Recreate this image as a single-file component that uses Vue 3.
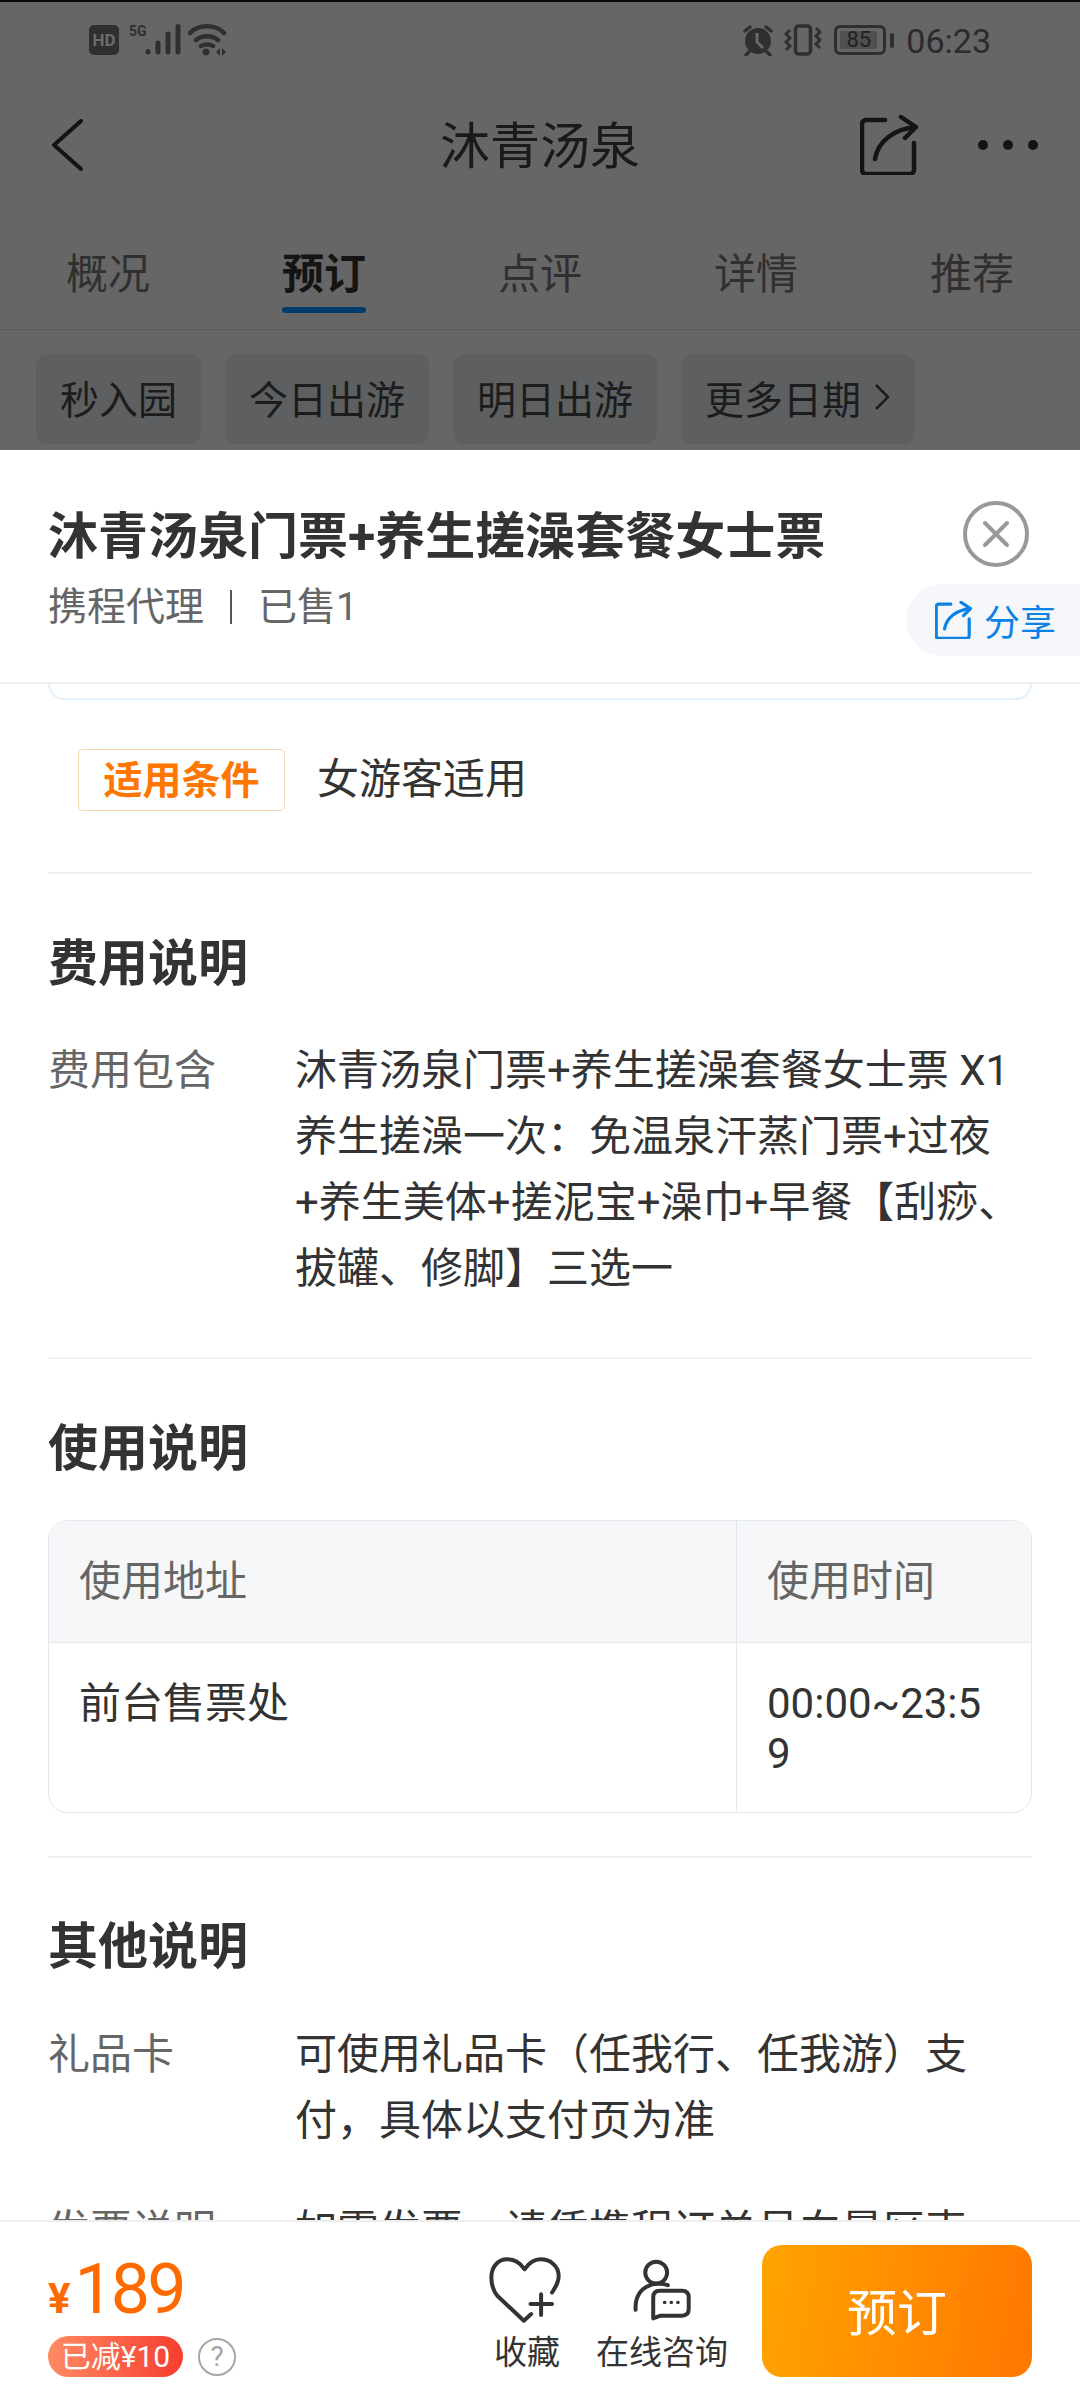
<template>
  <div class="page">
    <div class="backdrop">
      <div class="status">
        <div class="status-side">
          <span class="hd">HD</span>
          <svg class="signal" width="54" height="32" viewBox="0 0 54 32">
            <text x="0" y="12" class="five-g">5G</text>
            <path d="M19 27.5v.5M29 19v9M39 10v18M49 2.5v25.5" />
          </svg>
          <svg class="wifi" width="40" height="32" viewBox="0 0 40 32">
            <path d="M2 9C10 0 28 0 36 9M8 16c6-5 16-5 22 0M13 22c3-2 9-2 12 0" />
            <circle cx="18" cy="28" r="3.4" />
            <path class="wifi-arrows" d="M28 28l4-4v8zM34 24l4 4-4 4z" />
          </svg>
        </div>
        <div class="status-side">
          <svg width="32" height="32" viewBox="0 0 32 32">
            <circle cx="16" cy="17" r="13" class="fill" />
            <path d="M3 7l5-4M29 7l-5-4M7 28l-3 3M25 28l3 3" class="line" />
            <path d="M15 9v9l6 6" class="hand" />
          </svg>
          <svg class="vibrate" width="38" height="32" viewBox="0 0 38 32">
            <rect x="11.5" y="2" width="15" height="28" rx="3" class="line" />
            <path d="M6 6L2 10l4 4-4 4 4 4-4 4M32 4l4 4-4 4 4 4-4 4 4 4" class="zig" />
          </svg>
          <span class="battery"><span class="battery-in">85</span></span>
          <span class="battery-nub"></span>
          <span class="time">06:23</span>
        </div>
      </div>

      <div class="nav">
        <svg class="back" width="32" height="52" viewBox="0 0 32 52">
          <path d="M30 2L3 26l27 24" />
        </svg>
        <div class="nav-title">沐青汤泉</div>
        <div class="nav-right">
          <svg class="nav-share" width="60" height="60" viewBox="0 0 60 60">
            <path d="M25 5H6a4 4 0 0 0-4 4v46a4 4 0 0 0 4 4h44a4 4 0 0 0 4-4V28M15 44C18 26 34 14 56 12M41 2l15 10-11 11" />
          </svg>
          <div class="dots"><i></i><i></i><i></i></div>
        </div>
      </div>

      <div class="tabs">
        <div v-for="t in tabs" :key="t" class="tab" :class="{ active: t === '预订' }">
          <span>{{ t }}</span>
          <i class="tab-line"></i>
        </div>
      </div>

      <div class="chips">
        <div v-for="c in chips" :key="c" class="chip">{{ c }}</div>
        <div class="chip">
          更多日期
          <svg class="chip-arrow" width="18" height="30" viewBox="0 0 18 30">
            <path d="M3 3l12 12L3 27" />
          </svg>
        </div>
      </div>
    </div>

    <div class="sheet">
      <div class="sheet-head">
        <div class="sheet-title">沐青汤泉门票+养生搓澡套餐女士票</div>
        <div class="sheet-sub">携程代理<i class="bar"></i>已售1</div>
        <svg class="close" width="66" height="66" viewBox="0 0 66 66">
          <circle cx="33" cy="33" r="31" />
          <path d="M22 22l22 22M44 22L22 44" />
        </svg>
        <div class="share-pill">
          <svg width="38" height="38" viewBox="0 0 60 60">
            <path d="M25 5H6a4 4 0 0 0-4 4v46a4 4 0 0 0 4 4h44a4 4 0 0 0 4-4V28M15 44C18 26 34 14 56 12M41 2l15 10-11 11" />
          </svg>
          <span>分享</span>
        </div>
      </div>

      <div class="scroll">
        <div class="card-end"></div>
        <div class="cond">
          <span class="cond-tag">适用条件</span>
          <span class="cond-text">女游客适用</span>
        </div>

        <section class="block">
          <h3>费用说明</h3>
          <div class="row">
            <div class="row-label">费用包含</div>
            <div class="row-text">
              沐青汤泉门票+养生搓澡套餐女士票 X1<br />
              养生搓澡一次：免温泉汗蒸门票+过夜<br />
              +养生美体+搓泥宝+澡巾+早餐【刮痧、<br />
              拔罐、修脚】三选一
            </div>
          </div>
        </section>

        <section class="block">
          <h3 class="table-head">使用说明</h3>
          <div class="table">
            <div class="cell th">使用地址</div>
            <div class="cell th">使用时间</div>
            <div class="cell td">前台售票处</div>
            <div class="cell td">00:00~23:5<br />9</div>
          </div>
        </section>

        <section class="block last">
          <h3>其他说明</h3>
          <div class="row">
            <div class="row-label">礼品卡</div>
            <div class="row-text">
              可使用礼品卡（任我行、任我游）支<br />
              付，具体以支付页为准
            </div>
          </div>
          <div class="row next">
            <div class="row-label">发票说明</div>
            <div class="row-text">如需发票，请凭携程订单号向景区索</div>
          </div>
        </section>
      </div>

      <div class="footer">
        <div class="price-box">
          <div class="price"><span class="yen">¥</span>189</div>
          <div class="discount">
            <span class="discount-tag">已减¥10</span>
            <span class="help">?</span>
          </div>
        </div>
        <div class="action fav">
          <svg width="87" height="68" viewBox="71 50 260 205">
            <path d="M275 160C288 140 295 128 295 110C295 80 270 60 240 60C220 60 205 72 192 90C180 72 165 60 140 60C112 60 92 82 92 115C92 135 98 155 110 170L190 245L212 225M210 195H275M242 165V228" />
          </svg>
          <span>收藏</span>
        </div>
        <div class="action chat">
          <svg width="87" height="68" viewBox="476 50 260 205">
            <circle cx="587" cy="100" r="33" />
            <path d="M525 212C522 170 545 138 587 134C600 133 612 134 622 138" />
            <path d="M578 238V175Q578 155 598 155H665Q685 155 685 175V210Q685 230 665 230H600Z" />
            <path class="chat-dots" d="M612 190h1M632 190h1M652 190h1" />
          </svg>
          <span>在线咨询</span>
        </div>
        <div class="book">预订</div>
      </div>
    </div>
  </div>
</template>

<script setup>
const tabs = ['概况', '预订', '点评', '详情', '推荐'];
const chips = ['秒入园', '今日出游', '明日出游'];
</script>

<style scoped>
.page {
  width: 1080px;
  height: 2400px;
  overflow: hidden;
  display: flex;
  flex-direction: column;
  background: #666;
  font-family: Roboto, "Noto Sans CJK SC", sans-serif;
  color: #333;
}

/* dimmed page behind the sheet */
.backdrop {
  height: 450px;
  flex: none;
  overflow: hidden;
  box-sizing: border-box;
  border-top: 2px solid #0a0a0a;
}

.status {
  height: 78px;
  box-sizing: border-box;
  padding: 22px 89px 0 89px;
  display: flex;
  justify-content: space-between;
  align-items: flex-start;
}

.status-side {
  display: flex;
  align-items: center;
  height: 32px;
}

.hd {
  width: 30px;
  height: 30px;
  border-radius: 5px;
  background: #2f2f2f;
  color: #6a6a6a;
  font-size: 17px;
  font-weight: 700;
  line-height: 30px;
  text-align: center;
}

.signal {
  margin-left: 10px;
}

.signal path {
  fill: none;
  stroke: #2f2f2f;
  stroke-width: 5px;
  stroke-linecap: round;
}

.five-g {
  font-size: 14px;
  font-weight: 700;
  fill: #2f2f2f;
}

.wifi {
  margin-left: 5px;
}

.wifi path {
  fill: none;
  stroke: #2f2f2f;
  stroke-width: 4.5px;
  stroke-linecap: round;
}

.wifi circle,
.wifi .wifi-arrows {
  fill: #2f2f2f;
  stroke: none;
}

.fill {
  fill: #2f2f2f;
}

.line {
  fill: none;
  stroke: #2f2f2f;
  stroke-width: 3.5px;
  stroke-linecap: round;
}

.hand {
  fill: none;
  stroke: #6a6a6a;
  stroke-width: 3px;
}

.zig {
  fill: none;
  stroke: #2f2f2f;
  stroke-width: 3px;
}

.vibrate {
  margin-left: 10px;
}

.battery {
  width: 52px;
  height: 30px;
  margin-left: 12px;
  box-sizing: border-box;
  border: 3px solid #2f2f2f;
  border-radius: 6px;
  padding: 3px;
  display: flex;
}

.battery-in {
  width: 37px;
  background: #505050;
  border-radius: 2px;
  color: #222;
  font-size: 22px;
  line-height: 18px;
  text-align: center;
}

.battery-nub {
  width: 4px;
  height: 15px;
  margin-left: 4px;
  border-radius: 2px;
  background: #2f2f2f;
}

.time {
  margin-left: 12px;
  padding-top: 2px;
  font-size: 34px;
  line-height: 36px;
  color: #2b2b2b;
}

.nav {
  height: 130px;
  box-sizing: border-box;
  padding: 0 42px;
  display: grid;
  grid-template-columns: 1fr auto 1fr;
  align-items: center;
}

.back {
  margin-left: 9px;
}

.back path {
  fill: none;
  stroke: #141414;
  stroke-width: 4px;
  stroke-linecap: round;
  stroke-linejoin: round;
}

.nav-title {
  padding-top: 3px;
  font-size: 50px;
  line-height: 60px;
  color: #1a1a1a;
}

.nav-right {
  display: flex;
  justify-content: flex-end;
  align-items: center;
  gap: 58px;
}

.nav-share path {
  fill: none;
  stroke: #141414;
  stroke-width: 4.5px;
  stroke-linecap: round;
  stroke-linejoin: round;
}

.dots {
  width: 60px;
  display: flex;
  justify-content: space-between;
}

.dots i {
  width: 10px;
  height: 10px;
  border-radius: 50%;
  background: #141414;
}

.tabs {
  height: 120px;
  box-sizing: border-box;
  padding-top: 40px;
  display: grid;
  grid-template-columns: repeat(5, 1fr);
  border-bottom: 1px solid #5b5b5b;
}

.tab {
  display: flex;
  flex-direction: column;
  align-items: center;
  font-size: 42px;
  line-height: 50px;
  color: #303030;
}

.tab.active {
  color: #141414;
  font-weight: 700;
}

.tab-line {
  width: 84px;
  height: 6px;
  margin-top: 7px;
  border-radius: 3px;
}

.tab.active .tab-line {
  background: #003c6b;
}

.chips {
  padding: 24px 0 0 36px;
  display: flex;
  gap: 24px;
}

.chip {
  height: 90px;
  box-sizing: border-box;
  padding: 0 24px 4px;
  display: flex;
  align-items: center;
  gap: 12px;
  border-radius: 12px;
  background: #5d5f61;
  color: #1c1c1c;
  font-size: 39px;
}

.chip-arrow path {
  fill: none;
  stroke: #1c1c1c;
  stroke-width: 2.5px;
}

.sheet {
  flex: 1;
  min-height: 0;
  display: flex;
  flex-direction: column;
  background: #fff;
  overflow: hidden;
}

.sheet-head {
  position: relative;
  height: 234px;
  flex: none;
  box-sizing: border-box;
  padding: 62px 48px 0;
  border-bottom: 2px solid #f0f0f0;
}

.sheet-title {
  font-size: 50px;
  font-weight: 700;
  line-height: 50px;
  color: #333;
}

.sheet-sub {
  margin-top: 25px;
  display: flex;
  align-items: center;
  font-size: 39px;
  line-height: 40px;
  color: #666;
}

.bar {
  width: 2px;
  height: 34px;
  margin: 0 26px;
  background: #555;
}

.close {
  position: absolute;
  top: 51px;
  left: 963px;
}

.close circle,
.close path {
  fill: none;
  stroke: #999;
  stroke-width: 4px;
  stroke-linecap: round;
}

.share-pill {
  position: absolute;
  top: 134px;
  right: 0;
  width: 174px;
  height: 72px;
  box-sizing: border-box;
  padding-left: 29px;
  display: flex;
  align-items: center;
  gap: 11px;
  border-radius: 36px 0 0 36px;
  background: #f5f7fa;
  color: #0a82e6;
  font-size: 36px;
}

.share-pill path {
  fill: none;
  stroke: #0a82e6;
  stroke-width: 5px;
  stroke-linecap: round;
  stroke-linejoin: round;
}

.scroll {
  flex: 1;
  min-height: 0;
  overflow: hidden;
}

.card-end {
  height: 16px;
  margin: 0 48px;
  box-sizing: border-box;
  border: 2px solid #e2f0fc;
  border-top: 0;
  border-radius: 0 0 20px 20px;
}

.cond {
  margin: 49px 48px 0;
  padding: 0 0 61px 30px;
  display: flex;
  align-items: flex-start;
  gap: 32px;
  border-bottom: 2px solid #f2f2f2;
}

.cond-tag {
  width: 207px;
  height: 62px;
  box-sizing: border-box;
  padding-top: 3px;
  border: 1px solid #f6d6ae;
  border-radius: 5px;
  color: #ff7700;
  font-size: 39px;
  font-weight: 700;
  line-height: 56px;
  text-align: center;
}

.cond-text {
  margin-top: 2px;
  font-size: 42px;
  line-height: 58px;
}

.block {
  margin: 0 48px;
  padding: 60px 0 55px;
  border-bottom: 2px solid #f2f2f2;
}

.block.last {
  padding-top: 59px;
  border-bottom: 0;
}

h3 {
  margin: 0 0 44px;
  font-size: 50px;
  font-weight: 700;
  line-height: 60px;
  color: #333;
}

.last h3 {
  margin-bottom: 45px;
}

h3.table-head {
  margin-bottom: 41px;
}

.row {
  display: flex;
  font-size: 42px;
  line-height: 66px;
}

.row.next {
  margin-top: 44px;
}

.row-label {
  width: 247px;
  flex: none;
  color: #666;
}

.row-text {
  white-space: nowrap;
}

.table {
  display: grid;
  grid-template-columns: 688px 1fr;
  grid-template-rows: 122px 169px;
  border: 1px solid #e4e7ec;
  border-radius: 20px;
  overflow: hidden;
  font-size: 42px;
  margin-bottom: -12px;
}

.cell {
  box-sizing: border-box;
  padding: 0 30px;
}

.cell:nth-child(odd) {
  border-right: 1px solid #e4e7ec;
}

.th {
  padding-top: 2px;
  border-bottom: 1px solid #e4e7ec;
  background: #f6f7f9;
  color: #666;
  line-height: 117px;
}

.td {
  padding-top: 36px;
  line-height: 50px;
}

.footer {
  height: 180px;
  flex: none;
  box-sizing: border-box;
  padding: 23px 48px 0;
  display: flex;
  align-items: flex-start;
  border-top: 2px solid #eee;
  background: #fff;
}

.price-box {
  width: 447px;
  flex: none;
}

.price {
  height: 72px;
  margin-top: 8px;
  font-size: 70px;
  letter-spacing: -3px;
  line-height: 72px;
  color: #ff6a00;
}

.yen {
  margin-right: 4px;
  font-size: 42px;
  font-weight: 700;
  letter-spacing: 0;
}

.discount {
  margin-top: 11px;
  display: flex;
  align-items: center;
  gap: 15px;
}

.discount-tag {
  width: 135px;
  height: 41px;
  border-radius: 21px;
  background: linear-gradient(90deg, #ff8a62, #f63d30);
  color: #fff;
  font-size: 30px;
  line-height: 41px;
  text-align: center;
}

.help {
  width: 34px;
  height: 34px;
  border: 2px solid #a5a5a5;
  border-radius: 50%;
  color: #a5a5a5;
  font-size: 28px;
  line-height: 34px;
  text-align: center;
}

.action {
  flex: none;
  margin-top: 11px;
  display: flex;
  flex-direction: column;
  align-items: center;
  font-size: 33px;
  line-height: 40px;
  white-space: nowrap;
}

.action span {
  margin-top: 9px;
}

.action svg {
  fill: none;
  stroke: #333;
  stroke-width: 12px;
  stroke-linecap: round;
  stroke-linejoin: round;
}

.action .chat-dots {
  stroke-width: 10px;
}

.fav {
  width: 64px;
}

.chat {
  width: 130px;
  margin-left: 38px;
}

.book {
  width: 270px;
  height: 132px;
  flex: none;
  box-sizing: border-box;
  margin-left: 35px;
  padding-top: 6px;
  border-radius: 20px;
  background: linear-gradient(100deg, #ffa400, #ff7700);
  color: #fff;
  font-size: 50px;
  line-height: 126px;
  text-align: center;
}
</style>
